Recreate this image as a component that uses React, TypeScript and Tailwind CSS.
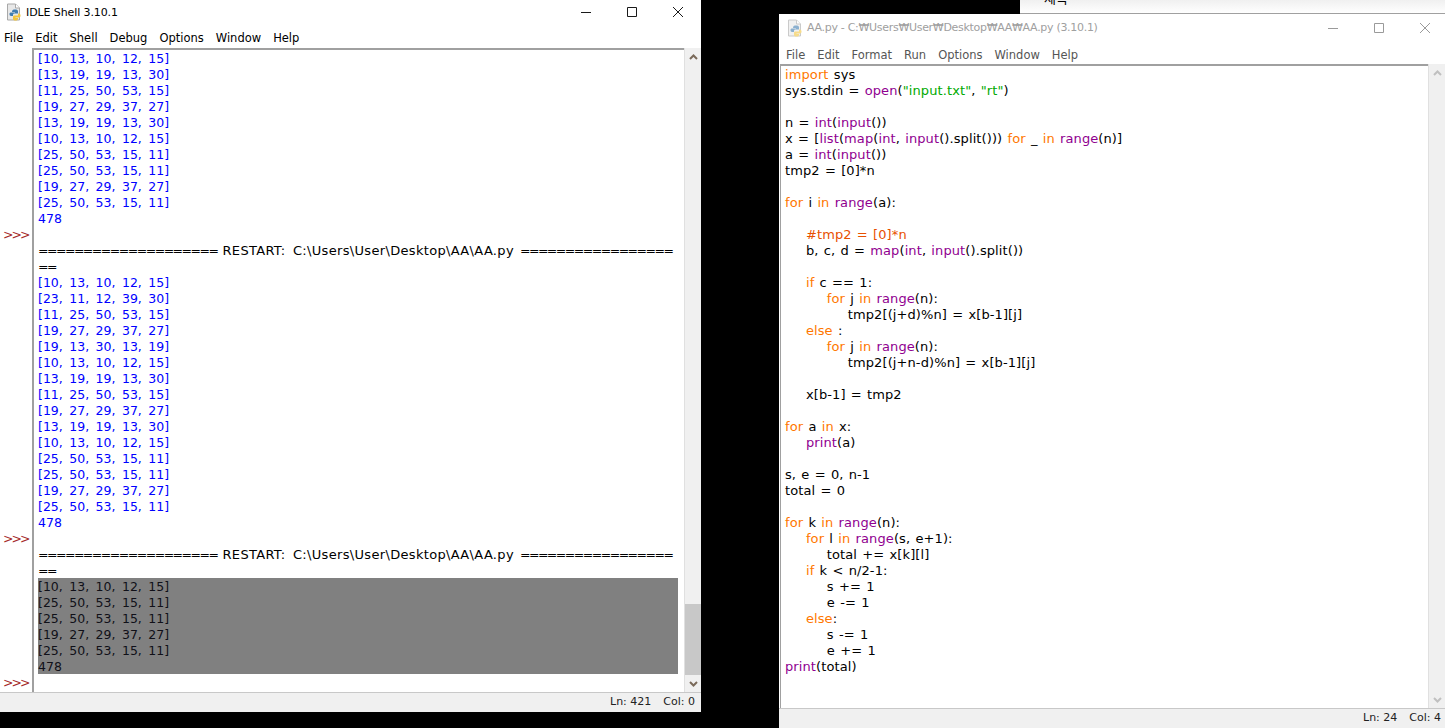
const sans = "font-['DejaVu_Sans',sans-serif]";

type Seg = [string, string?];

const kw = "text-[#ff7700]";
const bi = "text-[#900090]";
const st = "text-[#00aa00]";
const cm = "text-[#e85000]";

const a1 = "[10, 13, 10, 12, 15]";
const a2 = "[13, 19, 19, 13, 30]";
const a3 = "[11, 25, 50, 53, 15]";
const a4 = "[19, 27, 29, 37, 27]";
const a5 = "[25, 50, 53, 15, 11]";
const a6 = "[23, 11, 12, 39, 30]";
const a7 = "[19, 13, 30, 13, 19]";

const run1 = [a1, a2, a3, a4, a2, a1, a5, a5, a4, a5];
const run2 = [a1, a6, a3, a4, a7, a1, a2, a3, a4, a2, a1, a5, a5, a4, a5];
const run3 = [a1, a5, a5, a4, a5];

const code: Seg[][] = [
  [["import", kw], [" sys"]],
  [["sys.stdin = "], ["open", bi], ["("], ['"input.txt"', st], [", "], ['"rt"', st], [")"]],
  [],
  [["n = "], ["int", bi], ["("], ["input", bi], ["())"]],
  [["x = ["], ["list", bi], ["("], ["map", bi], ["("], ["int", bi], [", "], ["input", bi], ["().split())) "], ["for", kw], [" _ "], ["in", kw], [" "], ["range", bi], ["(n)]"]],
  [["a = "], ["int", bi], ["("], ["input", bi], ["())"]],
  [["tmp2 = [0]*n"]],
  [],
  [["for", kw], [" i "], ["in", kw], [" "], ["range", bi], ["(a):"]],
  [],
  [["    "], ["#tmp2 = [0]*n", cm]],
  [["    b, c, d = "], ["map", bi], ["("], ["int", bi], [", "], ["input", bi], ["().split())"]],
  [],
  [["    "], ["if", kw], [" c == 1:"]],
  [["        "], ["for", kw], [" j "], ["in", kw], [" "], ["range", bi], ["(n):"]],
  [["            tmp2[(j+d)%n] = x[b-1][j]"]],
  [["    "], ["else", kw], [" :"]],
  [["        "], ["for", kw], [" j "], ["in", kw], [" "], ["range", bi], ["(n):"]],
  [["            tmp2[(j+n-d)%n] = x[b-1][j]"]],
  [],
  [["    x[b-1] = tmp2"]],
  [],
  [["for", kw], [" a "], ["in", kw], [" x:"]],
  [["    "], ["print", bi], ["(a)"]],
  [],
  [["s, e = 0, n-1"]],
  [["total = 0"]],
  [],
  [["for", kw], [" k "], ["in", kw], [" "], ["range", bi], ["(n):"]],
  [["    "], ["for", kw], [" l "], ["in", kw], [" "], ["range", bi], ["(s, e+1):"]],
  [["        total += x[k][l]"]],
  [["    "], ["if", kw], [" k < n/2-1:"]],
  [["        s += 1"]],
  [["        e -= 1"]],
  [["    "], ["else", kw], [":"]],
  [["        s -= 1"]],
  [["        e += 1"]],
  [["print", bi], ["(total)"]],
];

function PyIcon({ faded }: { faded?: boolean }) {
  return (
    <svg width="16" height="18" viewBox="0 0 16 18" className={faded ? "shrink-0 opacity-60" : "shrink-0"}>
      <path d="M1.5 1h8l4 4v12h-12z" fill="#e8e8e8" stroke="#a8a8a8" />
      <path d="M9.5 1v4h4" fill="#fff" stroke="#a8a8a8" />
      <path d="M6 9c0-2 1-2.500 3-2.500s3 .5 3 2v2h-3.500c-1 0-1.500.5-1.500 1.500v1H5c-1 0-1.500-1-1.500-2S4 9.500 5 9.500h4V9z" fill="#3f7cb0" />
      <path d="M13 10.500c1 0 1.500 1 1.500 2s-.5 2-1.500 2H9.500V15H12v1c0 1-1.500 1.500-2.500 1.500S7 17 7 16v-2c0-1 .5-1.500 1.500-1.500H12v-2z" fill="#f2c53d" />
    </svg>
  );
}

function Controls({ faded }: { faded?: boolean }) {
  const c = faded ? "#9a9a9a" : "#1a1a1a";
  return (
    <div className={faded ? "-mr-[3px] flex" : "flex"}>
      <svg width="46" height="24" viewBox="0 0 46 24">
        <path d="M18 12.500h10" stroke={c} fill="none" />
      </svg>
      <svg width="46" height="24" viewBox="0 0 46 24">
        <path d="M18.500 7.500h9v9h-9z" stroke={c} fill="none" />
      </svg>
      <svg width="46" height="24" viewBox="0 0 46 24">
        <path d="M18 7l10 10M28 7L18 17" stroke={c} fill="none" />
      </svg>
    </div>
  );
}

function Chevron({ up, faded }: { up?: boolean; faded?: boolean }) {
  return (
    <svg width="15" height="12" viewBox="0 0 15 12" className="shrink-0">
      <path
        d={up ? "M4 8l3.500-3.500L11 8" : "M4 4l3.500 3.500L11 4"}
        stroke={faded ? "#c0c0c0" : "#7a6a5a"}
        strokeWidth="2"
        fill="none"
      />
    </svg>
  );
}

function Menu({ items, faded }: { items: string[]; faded?: boolean }) {
  return (
    <div className={`flex h-[24px] items-center gap-[12px] pl-1 text-[11.500px] ${faded ? "text-[#555]" : "text-black"}`}>
      {items.map((m) => (
        <span key={m}>{m}</span>
      ))}
    </div>
  );
}

function Status({ ln, col, pad }: { ln: string; col: string; pad: string }) {
  return (
    <div className={`flex h-[20px] items-center justify-end gap-[12px] border-t border-[#c8c8c8] bg-[#f0f0f0] text-[11px] text-[#222] ${pad}`}>
      <span>Ln: {ln}</span>
      <span>Col: {col}</span>
    </div>
  );
}

function Line({ children, className = "" }: { children?: React.ReactNode; className?: string }) {
  return <div className={`h-[16px] whitespace-pre leading-[16px] ${className}`}>{children}</div>;
}

function Blue({ rows }: { rows: string[] }) {
  return (
    <>
      {rows.map((r, i) => (
        <Line key={i} className="text-[#0000ff] [word-spacing:2.500px]">
          {r}
        </Line>
      ))}
      <Line className="text-[#0000ff]">478</Line>
    </>
  );
}

function Restart() {
  return (
    <>
      <Line className="text-black">
        <span className="tracking-[-1.500px]">====================</span>
        <span className="ml-[5px] text-[13px] tracking-[0.330px] [word-spacing:3px]">RESTART: C:\Users\User\Desktop\AA\AA.py</span>
        <span className="ml-[6px] tracking-[-1.500px]">=================</span>
      </Line>
      <Line className="tracking-[-1.500px] text-black">==</Line>
    </>
  );
}

function Prompt() {
  return <div className="pl-[3px] tracking-[-2px]">&gt;&gt;&gt;</div>;
}

function ShellWindow() {
  return (
    <div className="absolute left-0 top-0 flex h-[712px] w-[701px] flex-col bg-[#f0f0f0]">
      <div className="flex h-[24px] items-center bg-white pl-[6px]">
        <PyIcon />
        <span className="ml-[4px] flex-1 pt-[2px] text-[11px] tracking-[-0.100px] text-black">IDLE Shell 3.10.1</span>
        <Controls />
      </div>
      <div className="h-[24px] bg-white pt-[3px]">
        <Menu items={["File", "Edit", "Shell", "Debug", "Options", "Window", "Help"]} />
      </div>
      <div className="flex min-h-0 flex-1">
        <div className="w-[32px] shrink-0 bg-white text-[12.500px] leading-[16px] text-[#a52a2a]">
          <div className="h-[179px]" />
          <Prompt />
          <div className="h-[288px]" />
          <Prompt />
          <div className="h-[128px]" />
          <Prompt />
        </div>
        <div className="flex-1 overflow-hidden border-l-2 border-t-2 border-[#a0a0a0] bg-white pl-[4px] pt-[1px] text-[12.500px]">
          <Blue rows={run1} />
          <Line />
          <Restart />
          <Blue rows={run2} />
          <Line />
          <Restart />
          <div className="mr-[6px] -mt-px h-[96px] bg-[#808080] pt-px">
            {run3.map((r, i) => (
              <Line key={i} className="text-[#101018] [word-spacing:2.500px]">
                {r}
              </Line>
            ))}
            <Line className="text-[#101018]">478</Line>
          </div>
        </div>
        <div className="flex w-[17px] shrink-0 flex-col border-l border-[#e0e0e0] bg-[#f0f0f0]">
          <div className="flex h-[17px] items-center justify-center">
            <Chevron up />
          </div>
          <div className="flex-1" />
          <div className="h-[71px] bg-[#c8c8c8]" />
          <div className="flex h-[17px] items-center justify-center">
            <Chevron />
          </div>
        </div>
      </div>
      <Status ln="421" col="0" pad="pr-[6px]" />
    </div>
  );
}

function EditorWindow() {
  return (
    <div className="absolute left-[779px] top-[14px] flex h-[714px] w-[666px] flex-col bg-[#f0f0f0]">
      <div className="flex h-[27px] items-center bg-white pl-[8px]">
        <PyIcon faded />
        <span className="ml-[4px] flex-1 pt-[2px] text-[11px] tracking-[-0.300px] text-[#a0a0a0]">
          AA.py - C:₩Users₩User₩Desktop₩AA₩AA.py (3.10.1)
        </span>
        <Controls faded />
      </div>
      <div className="h-[23px] bg-white pl-[3px] pt-[3px]">
        <Menu faded items={["File", "Edit", "Format", "Run", "Options", "Window", "Help"]} />
      </div>
      <div className="flex min-h-0 flex-1 bg-white pl-px">
        <div className="flex-1 overflow-hidden border-l border-t-2 border-[#a0a0a0] bg-white pl-[4px] pt-[1px] text-[13px] tracking-[0.100px] text-black [word-spacing:1px]">
          {code.map((segs, i) => (
            <Line key={i}>
              {segs.map(([t, c], j) => (
                <span key={j} className={c}>
                  {t}
                </span>
              ))}
            </Line>
          ))}
        </div>
        <div className="flex w-[17px] shrink-0 flex-col justify-between border-l border-[#e0e0e0] bg-[#f0f0f0]">
          <div className="flex h-[17px] items-center justify-center">
            <Chevron up faded />
          </div>
          <div className="flex h-[17px] items-center justify-center">
            <Chevron faded />
          </div>
        </div>
      </div>
      <Status ln="24" col="4" pad="pr-[4px]" />
    </div>
  );
}

export default function App() {
  return (
    <div className={`relative h-[728px] w-[1445px] overflow-hidden bg-black ${sans}`}>
      <div className="absolute left-[1020px] top-0 h-[14px] w-[425px] overflow-hidden border-b border-[#a0a0a0] bg-gradient-to-b from-[#f0f0f0] to-white pl-[24px] font-['Noto_Sans_CJK_KR',sans-serif] text-[13px] leading-[0px] text-black">
        <div className="-mt-[2px]">제목</div>
      </div>
      <ShellWindow />
      <EditorWindow />
    </div>
  );
}
